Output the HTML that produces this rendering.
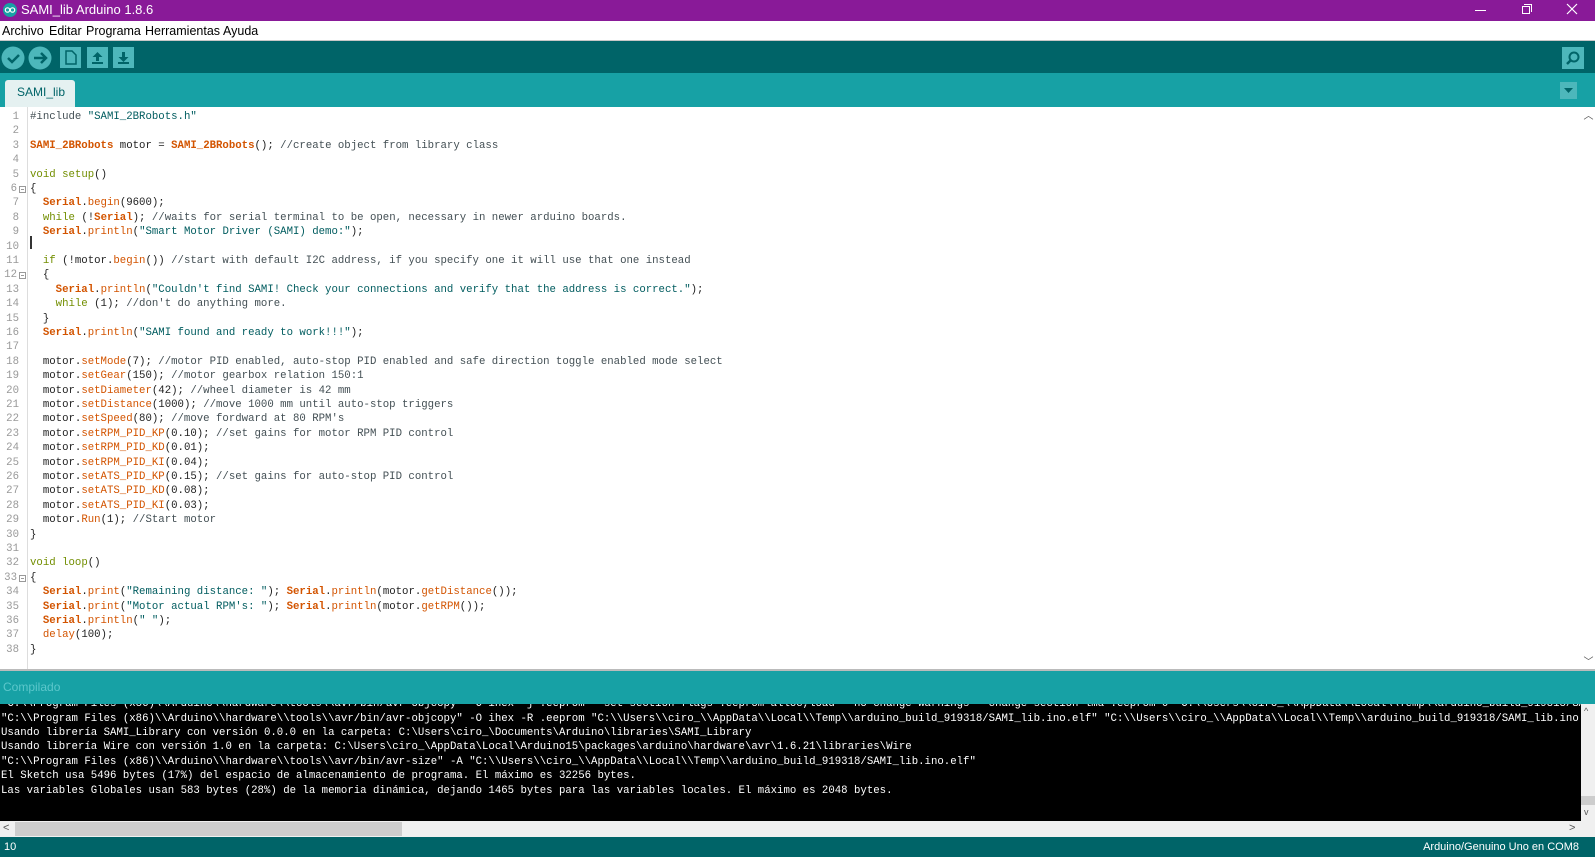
<!DOCTYPE html>
<html><head><meta charset="utf-8"><style>
*{margin:0;padding:0;box-sizing:border-box}
body{width:1595px;height:857px;overflow:hidden;background:#fff;font-family:"Liberation Sans",sans-serif;position:relative}
.a{position:absolute}
#title{left:0;top:0;width:1595px;height:21px;background:#891a98;color:#fff;font-size:13px}
#menu{left:0;top:21px;width:1595px;height:20px;background:#fff;font-size:12.5px;color:#000;border-bottom:1px solid #c8c8c8}
#tool{left:0;top:41px;width:1595px;height:32px;background:#006468}
#tabs{left:0;top:73px;width:1595px;height:34px;background:#17a1a5}
.code{font-family:"Liberation Mono",monospace;font-size:10.7px;white-space:pre;color:#222}
.ln{position:absolute;left:0;width:19px;text-align:right;color:#999;font-family:"Liberation Mono",monospace;font-size:10.7px}
.fb{position:absolute;left:19px;width:7px;height:7px;border:1px solid #999;margin-top:3px}
.fb:after{content:"";position:absolute;left:1px;top:2px;width:3px;height:1px;background:#999}
.cl{position:absolute;left:30px}
.f{color:#d35400}.b{color:#d35400;font-weight:bold}.k{color:#728e00}.s{color:#005c5f}.c{color:#434f54}
#con{left:0;top:704px;width:1581px;height:117px;background:#000;overflow:hidden}
.cc{position:absolute;left:1px;color:#fff;font-family:"Liberation Mono",monospace;font-size:10.7px;white-space:pre}
</style></head><body>
<div id="title" class="a">
<svg class="a" style="left:3px;top:3px" width="14" height="14"><circle cx="7" cy="7" r="7" fill="#17a1a5"/><circle cx="4.5" cy="7" r="2.2" fill="none" stroke="#fff" stroke-width="1.2"/><circle cx="9.5" cy="7" r="2.2" fill="none" stroke="#fff" stroke-width="1.2"/></svg>
<span class="a" style="left:21px;top:2px">SAMI_lib Arduino 1.8.6</span>
<div class="a" style="left:1475px;top:10px;width:11px;height:1px;background:#fff"></div>
<div class="a" style="left:1522px;top:6px;width:8px;height:8px;border:1px solid #fff"></div>
<div class="a" style="left:1524px;top:4px;width:8px;height:8px;border-top:1px solid #fff;border-right:1px solid #fff"></div>
<svg class="a" style="left:1566px;top:3px" width="12" height="12"><path d="M1 1L11 11M11 1L1 11" stroke="#fff" stroke-width="1.2"/></svg>
</div>
<div id="menu" class="a"><span class="a" style="left:2px;top:3px">Archivo</span><span class="a" style="left:49px;top:3px">Editar</span><span class="a" style="left:86px;top:3px">Programa</span><span class="a" style="left:145px;top:3px">Herramientas</span><span class="a" style="left:223px;top:3px">Ayuda</span></div>
<div id="tool" class="a">
<svg class="a" style="left:0;top:0" width="140" height="32">
<circle cx="13" cy="17" r="11.5" fill="#4db7bb"/><path d="M8 17l4 4 7-7" stroke="#006468" stroke-width="2.5" fill="none"/>
<circle cx="40" cy="17" r="11.5" fill="#4db7bb"/><path d="M34 17h11M41 12l5 5-5 5" stroke="#006468" stroke-width="2.5" fill="none"/>
<rect x="60" y="6" width="21" height="21" fill="#4db7bb"/><path d="M66 10h6l4 4v9h-10z" fill="none" stroke="#006468" stroke-width="1.5"/>
<rect x="87" y="6" width="21" height="21" fill="#4db7bb"/><path d="M97.5 11l-5 5h3.5v4h3v-4h3.5z" fill="#006468"/><rect x="92" y="21" width="11" height="2" fill="#006468"/>
<rect x="113" y="6" width="21" height="21" fill="#4db7bb"/><path d="M123.5 21l-5-5h3.5v-5h3v5h3.5z" fill="#006468"/><rect x="118" y="21" width="11" height="2" fill="#006468"/>
</svg>
<svg class="a" style="left:1562px;top:6px" width="22" height="22"><rect width="22" height="22" fill="#4db7bb"/><circle cx="12" cy="10" r="4.5" fill="none" stroke="#006468" stroke-width="2"/><path d="M9 13l-4 4" stroke="#006468" stroke-width="2.5"/></svg>
</div>
<div id="tabs" class="a">
<div class="a" style="left:5px;top:7px;width:70px;height:27px;background:#e5f1f1;border-radius:3px 3px 0 0;color:#006468;font-size:12px;padding:5px 0 0 12px">SAMI_lib</div>
<svg class="a" style="left:1560px;top:9px" width="17" height="17"><rect width="17" height="17" fill="#4db7bb"/><path d="M4 6h9l-4.5 5z" fill="#006468"/></svg>
</div>
<div class="a" style="left:0;top:107px;width:1595px;height:564px;background:#fff"></div>
<div class="a" style="left:1582px;top:107px;width:13px;height:564px;background:#fff;color:#555;font-size:10px;text-align:center">︿</div>
<div class="a" style="left:1582px;top:653px;width:13px;height:14px;color:#555;font-size:10px;text-align:center">﹀</div>
<div class="a code" style="left:0;top:111px;width:1580px;height:560px">
<div class="ln" style="top:0">1</div><div class="cl" style="top:0"><span class="c">#include</span> <span class="s">"SAMI_2BRobots.h"</span></div>
<div class="ln" style="top:14.4px">2</div>
<div class="ln" style="top:28.8px">3</div><div class="cl" style="top:28.8px"><span class="b">SAMI_2BRobots</span> motor = <span class="b">SAMI_2BRobots</span>(); <span class="c">//create object from library class</span></div>
<div class="ln" style="top:43.2px">4</div>
<div class="ln" style="top:57.6px">5</div><div class="cl" style="top:57.6px"><span class="k">void</span> <span class="k">setup</span>()</div>
<div class="ln" style="top:72px;width:17px">6</div><div class="fb" style="top:72px"></div><div class="cl" style="top:72px">{</div>
<div class="ln" style="top:86.4px">7</div><div class="cl" style="top:86.4px">  <span class="b">Serial</span>.<span class="f">begin</span>(9600);</div>
<div class="ln" style="top:100.8px">8</div><div class="cl" style="top:100.8px">  <span class="k">while</span> (!<span class="b">Serial</span>); <span class="c">//waits for serial terminal to be open, necessary in newer arduino boards.</span></div>
<div class="ln" style="top:115.2px">9</div><div class="cl" style="top:115.2px">  <span class="b">Serial</span>.<span class="f">println</span>(<span class="s">"Smart Motor Driver (SAMI) demo:"</span>);</div>
<div class="ln" style="top:129.6px">10</div><div class="a" style="left:30px;top:125px;width:2px;height:13px;background:#333"></div>
<div class="ln" style="top:144px">11</div><div class="cl" style="top:144px">  <span class="k">if</span> (!motor.<span class="f">begin</span>()) <span class="c">//start with default I2C address, if you specify one it will use that one instead</span></div>
<div class="ln" style="top:158.4px;width:17px">12</div><div class="fb" style="top:158.4px"></div><div class="cl" style="top:158.4px">  {</div>
<div class="ln" style="top:172.8px">13</div><div class="cl" style="top:172.8px">    <span class="b">Serial</span>.<span class="f">println</span>(<span class="s">"Couldn't find SAMI! Check your connections and verify that the address is correct."</span>);</div>
<div class="ln" style="top:187.2px">14</div><div class="cl" style="top:187.2px">    <span class="k">while</span> (1); <span class="c">//don't do anything more.</span></div>
<div class="ln" style="top:201.6px">15</div><div class="cl" style="top:201.6px">  }</div>
<div class="ln" style="top:216px">16</div><div class="cl" style="top:216px">  <span class="b">Serial</span>.<span class="f">println</span>(<span class="s">"SAMI found and ready to work!!!"</span>);</div>
<div class="ln" style="top:230.4px">17</div>
<div class="ln" style="top:244.8px">18</div><div class="cl" style="top:244.8px">  motor.<span class="f">setMode</span>(7); <span class="c">//motor PID enabled, auto-stop PID enabled and safe direction toggle enabled mode select</span></div>
<div class="ln" style="top:259.2px">19</div><div class="cl" style="top:259.2px">  motor.<span class="f">setGear</span>(150); <span class="c">//motor gearbox relation 150:1</span></div>
<div class="ln" style="top:273.6px">20</div><div class="cl" style="top:273.6px">  motor.<span class="f">setDiameter</span>(42); <span class="c">//wheel diameter is 42 mm</span></div>
<div class="ln" style="top:288px">21</div><div class="cl" style="top:288px">  motor.<span class="f">setDistance</span>(1000); <span class="c">//move 1000 mm until auto-stop triggers</span></div>
<div class="ln" style="top:302.4px">22</div><div class="cl" style="top:302.4px">  motor.<span class="f">setSpeed</span>(80); <span class="c">//move fordward at 80 RPM's</span></div>
<div class="ln" style="top:316.8px">23</div><div class="cl" style="top:316.8px">  motor.<span class="f">setRPM_PID_KP</span>(0.10); <span class="c">//set gains for motor RPM PID control</span></div>
<div class="ln" style="top:331.2px">24</div><div class="cl" style="top:331.2px">  motor.<span class="f">setRPM_PID_KD</span>(0.01);</div>
<div class="ln" style="top:345.6px">25</div><div class="cl" style="top:345.6px">  motor.<span class="f">setRPM_PID_KI</span>(0.04);</div>
<div class="ln" style="top:360px">26</div><div class="cl" style="top:360px">  motor.<span class="f">setATS_PID_KP</span>(0.15); <span class="c">//set gains for auto-stop PID control</span></div>
<div class="ln" style="top:374.4px">27</div><div class="cl" style="top:374.4px">  motor.<span class="f">setATS_PID_KD</span>(0.08);</div>
<div class="ln" style="top:388.8px">28</div><div class="cl" style="top:388.8px">  motor.<span class="f">setATS_PID_KI</span>(0.03);</div>
<div class="ln" style="top:403.2px">29</div><div class="cl" style="top:403.2px">  motor.<span class="f">Run</span>(1); <span class="c">//Start motor</span></div>
<div class="ln" style="top:417.6px">30</div><div class="cl" style="top:417.6px">}</div>
<div class="ln" style="top:432px">31</div>
<div class="ln" style="top:446.4px">32</div><div class="cl" style="top:446.4px"><span class="k">void</span> <span class="k">loop</span>()</div>
<div class="ln" style="top:460.8px;width:17px">33</div><div class="fb" style="top:460.8px"></div><div class="cl" style="top:460.8px">{</div>
<div class="ln" style="top:475.2px">34</div><div class="cl" style="top:475.2px">  <span class="b">Serial</span>.<span class="f">print</span>(<span class="s">"Remaining distance: "</span>); <span class="b">Serial</span>.<span class="f">println</span>(motor.<span class="f">getDistance</span>());</div>
<div class="ln" style="top:489.6px">35</div><div class="cl" style="top:489.6px">  <span class="b">Serial</span>.<span class="f">print</span>(<span class="s">"Motor actual RPM's: "</span>); <span class="b">Serial</span>.<span class="f">println</span>(motor.<span class="f">getRPM</span>());</div>
<div class="ln" style="top:504px">36</div><div class="cl" style="top:504px">  <span class="b">Serial</span>.<span class="f">println</span>(<span class="s">" "</span>);</div>
<div class="ln" style="top:518.4px">37</div><div class="cl" style="top:518.4px">  <span class="f">delay</span>(100);</div>
<div class="ln" style="top:532.8px">38</div><div class="cl" style="top:532.8px">}</div>
</div>
<div class="a" style="left:27px;top:107px;width:1px;height:564px;background:#ddd"></div>
<div class="a" style="left:0;top:669px;width:1595px;height:2px;background:#bbb"></div>
<div class="a" style="left:0;top:671px;width:1595px;height:33px;background:#17a1a5;font-size:12px"><span class="a" style="left:3px;top:9px;color:#5cc7cb">Compilado</span></div>
<div id="con" class="a">
<div class="cc" style="top:-6px">"C:\\Program Files (x86)\\Arduino\\hardware\\tools\\avr/bin/avr-objcopy" -O ihex -j .eeprom --set-section-flags=.eeprom=alloc,load --no-change-warnings --change-section-lma .eeprom=0 "C:\\Users\\ciro_\\AppData\\Local\\Temp\\arduino_build_919318/SA</div>
<div class="cc" style="top:8.5px">"C:\\Program Files (x86)\\Arduino\\hardware\\tools\\avr/bin/avr-objcopy" -O ihex -R .eeprom "C:\\Users\\ciro_\\AppData\\Local\\Temp\\arduino_build_919318/SAMI_lib.ino.elf" "C:\\Users\\ciro_\\AppData\\Local\\Temp\\arduino_build_919318/SAMI_lib.ino.</div>
<div class="cc" style="top:22.9px">Usando librería SAMI_Library con versión 0.0.0 en la carpeta: C:\Users\ciro_\Documents\Arduino\libraries\SAMI_Library</div>
<div class="cc" style="top:37.3px">Usando librería Wire con versión 1.0 en la carpeta: C:\Users\ciro_\AppData\Local\Arduino15\packages\arduino\hardware\avr\1.6.21\libraries\Wire</div>
<div class="cc" style="top:51.7px">"C:\\Program Files (x86)\\Arduino\\hardware\\tools\\avr/bin/avr-size" -A "C:\\Users\\ciro_\\AppData\\Local\\Temp\\arduino_build_919318/SAMI_lib.ino.elf"</div>
<div class="cc" style="top:66.1px">El Sketch usa 5496 bytes (17%) del espacio de almacenamiento de programa. El máximo es 32256 bytes.</div>
<div class="cc" style="top:80.5px">Las variables Globales usan 583 bytes (28%) de la memoria dinámica, dejando 1465 bytes para las variables locales. El máximo es 2048 bytes.</div>
</div>
<div class="a" style="left:1581px;top:704px;width:14px;height:117px;background:#f0f0f0"><div class="a" style="left:0;top:92px;width:14px;height:9px;background:#cdcdcd"></div><span class="a" style="left:3px;top:2px;font-size:9px;color:#555">^</span><span class="a" style="left:3px;top:103px;font-size:9px;color:#555">v</span></div>
<div class="a" style="left:0;top:821px;width:1595px;height:16px;background:#f0f0f0"><div class="a" style="left:15px;top:1px;width:387px;height:14px;background:#cdcdcd"></div><span class="a" style="left:3px;top:1px;font-size:11px;color:#555">&lt;</span><span class="a" style="left:1569px;top:1px;font-size:11px;color:#555">&gt;</span></div>
<div class="a" style="left:0;top:837px;width:1595px;height:20px;background:#006468;color:#fff;font-size:11px"><span class="a" style="left:4px;top:4px">10</span><span class="a" style="right:16px;top:4px">Arduino/Genuino Uno en COM8</span></div>
</body></html>
